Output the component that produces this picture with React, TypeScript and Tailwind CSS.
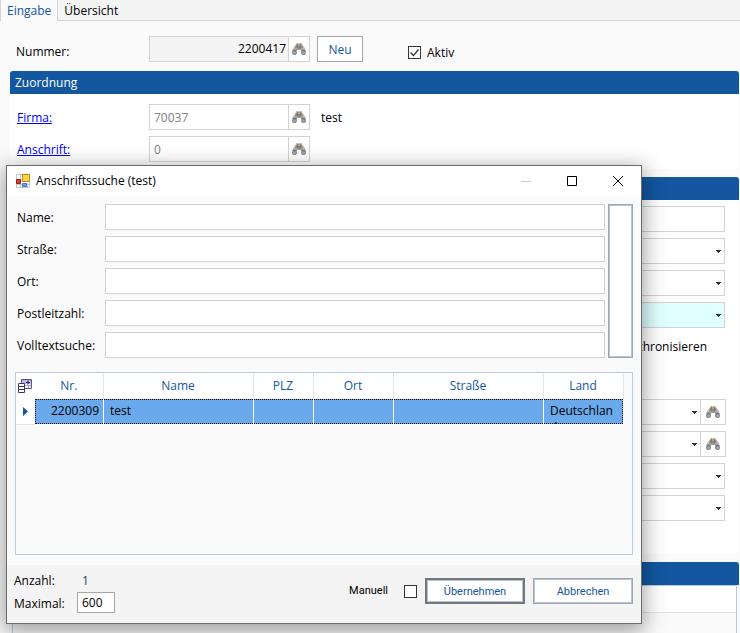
import type { ReactNode } from "react";

function Binoculars() {
  return (
    <svg width="14" height="12" viewBox="0 0 14 12" aria-hidden="true">
      <path d="M4 1l1-1h1l1 1 1-1h1l1 1 2 3 2 4v2l-1 2h-3L9 10V7H5v3l-1 2H1l-1-2V8l2-4z" fill="#aba49c" />
      <path d="M4.5 1.5L2 6M9.5 1.5L12 6" stroke="#d0cbc5" fill="none" />
      <path d="M3.5 5L5.5 1.5v4M10.5 5l-2-3.5v4" stroke="#7f7870" fill="none" />
      <path d="M6 3h2v3H6z" fill="#8f8982" />
      <path d="M1 7.5h3.5M9.5 7.5H13" stroke="#77726c" fill="none" />
      <ellipse cx="2.5" cy="9.8" rx="1.8" ry="1.6" fill="#8fb0ca" stroke="#808080" strokeWidth=".8" />
      <ellipse cx="11.5" cy="9.8" rx="1.8" ry="1.6" fill="#8fb0ca" stroke="#808080" strokeWidth=".8" />
    </svg>
  );
}

function AppIcon() {
  return (
    <svg width="14" height="14" viewBox="0 0 14 14" aria-hidden="true">
      <path d="M.5.5h13v13H.5zM.5 10.5h13M4.5 0v14M11.5 9v5" fill="#fff" stroke="#c4c4c4" />
      <path d="M.5 5.5h4v4h-4z" fill="#d8432f" stroke="#9b1a14" />
      <path d="M6.5.5h7v7h-7z" fill="#ffd34d" stroke="#b8860b" />
      <path d="M6.5 9.5h4v3h-4z" fill="#6fa3f2" stroke="#3f74d0" />
    </svg>
  );
}

function GridIcon() {
  return (
    <svg width="14" height="14" viewBox="0 0 14 14" aria-hidden="true">
      <path d="M3.5.5h10v9h-10z" fill="#f4f3f9" stroke="#5a5480" />
      <path d="M4 1h9v4H4z" fill="#bcb8d6" />
      <path d="M8 3.5h4M10 1.5v4" stroke="#2b2650" />
      <path d="M7 6.5h6M10.5 6v3" stroke="#a9a5c6" />
      <path d="M.5 4.5h6v9h-6z" fill="#fff" stroke="#3d3765" />
      <path d="M1 7.5h5M1 10.5h5" stroke="#3d3765" />
    </svg>
  );
}

function Arrow() {
  return (
    <svg width="5" height="3" viewBox="0 0 5 3" aria-hidden="true" className="shrink-0">
      <path d="M0 0h5v1H4v1H3v1H2V2H1V1H0z" fill="#333" />
    </svg>
  );
}

function SearchButton({ label }: { label: string }) {
  return (
    <button aria-label={label} className="flex w-[22px] shrink-0 items-center justify-center border border-[#d3d3d3] bg-white">
      <Binoculars />
    </button>
  );
}

function SectionTitle({ children }: { children?: ReactNode }) {
  return <h2 className="h-[23px] rounded-t-[3px] bg-[#1357a0] px-[5px] leading-[23px] text-white">{children}</h2>;
}

function Combo({ label, search, highlight }: { label: string; search?: boolean; highlight?: boolean }) {
  return (
    <div className="flex h-[26px]">
      <div className={`relative flex flex-1 items-center border border-[#d3d3d3] ${highlight ? "bg-[#e0ffff]" : "bg-white"}`}>
        <select aria-label={label} className="h-full w-full appearance-none outline-none" />
        <span className="pointer-events-none absolute right-[3px]">
          <Arrow />
        </span>
      </div>
      {search && (
        <button aria-label={`${label} suchen`} className="flex w-[25px] items-center justify-center border border-l-0 border-[#d3d3d3] bg-white">
          <Binoculars />
        </button>
      )}
    </div>
  );
}

const searchFields = ["Name:", "Straße:", "Ort:", "Postleitzahl:", "Volltextsuche:"];

const columns = [
  { title: "Nr.", width: "w-[68px]" },
  { title: "Name", width: "w-[150px]" },
  { title: "PLZ", width: "w-[60px]" },
  { title: "Ort", width: "w-[80px]" },
  { title: "Straße", width: "w-auto" },
  { title: "Land", width: "w-[80px]" },
];

function SearchDialog() {
  return (
    <div
      role="dialog"
      aria-label="Anschriftssuche (test)"
      className="absolute top-[165px] right-[98px] left-[6px] flex flex-col border border-[#6b6b6b] bg-[#fafafa] shadow-[0_5px_20px_2px_rgba(0,0,0,0.38)]"
    >
      <div className="flex h-[30px] items-center bg-white pl-[9px]">
        <AppIcon />
        <span className="ml-[6px] flex-1">Anschriftssuche (test)</span>
        <button aria-label="Minimieren" disabled className="flex w-[46px] justify-center">
          <svg width="10" height="10"><path d="M0 5.5h10" stroke="#ccc" /></svg>
        </button>
        <button aria-label="Maximieren" className="flex w-[46px] justify-center">
          <svg width="10" height="10"><path d="M.5.5h9v9h-9z" fill="none" stroke="#000" /></svg>
        </button>
        <button aria-label="Schließen" className="flex w-[46px] justify-center">
          <svg width="10" height="10"><path d="M0 0l10 10M10 0L0 10" stroke="#000" /></svg>
        </button>
      </div>

      {/* Search fields */}
      <div className="flex gap-[3px] pt-2 pr-2 pl-[10px]">
        <div className="flex flex-1 flex-col gap-[6px]">
          {searchFields.map((name) => (
            <label key={name} className="flex h-[26px] items-center">
              <span className="w-[88px] pt-0.5">{name}</span>
              <input className="h-full flex-1 border border-[#d3d3d3] bg-white px-1 outline-none" />
            </label>
          ))}
        </div>
        <button aria-label="Suchen" className="w-[25px] border border-[#a6a6a6] bg-white inset-ring inset-ring-[#b0c4de]" />
      </div>

      {/* Result list */}
      <div className="mx-2 mt-[14px] h-[183px] border border-[#b9cbdc]">
        <table className="w-full table-fixed border-collapse">
          <thead>
            <tr className="h-[26px] bg-white text-[#1357a0]">
              <th className="w-[19px] p-0 pl-[2px]">
                <GridIcon />
              </th>
              {columns.map((c) => (
                <th key={c.title} className={`border-r border-[#e3e3e3] p-0 pb-px font-normal ${c.width}`}>
                  {c.title}
                </th>
              ))}
              <th className="w-[9px] bg-[#fafafa] p-0" />
            </tr>
          </thead>
          <tbody>
            <tr className="h-[25px]">
              <td className="border-b border-[#e3e3e3] bg-white p-0 pl-[7px]">
                <svg width="5" height="9" aria-hidden="true"><path d="M0 0l5 4.5L0 9z" fill="#1357a0" /></svg>
              </td>
              <td colSpan={6} className="p-0">
                <div className="flex h-[25px] bg-[#6aa9ec] leading-[23px] outline-1 -outline-offset-1 outline-black outline-dotted">
                  <span className="w-[69px] border-r border-white pr-1 text-right">2200309</span>
                  <span className="w-[150px] border-r border-white pl-[6px]">test</span>
                  <span className="w-[60px] border-r border-white" />
                  <span className="w-[80px] border-r border-white" />
                  <span className="flex-1 border-r border-white" />
                  <span className="w-[79px] overflow-hidden pt-[3px] pr-2 pl-[6px] leading-[17px] break-all">Deutschland</span>
                </div>
              </td>
              <td className="p-0" />
            </tr>
          </tbody>
        </table>
      </div>

      {/* Footer */}
      <div className="mt-[10px] flex h-[58px] justify-between bg-[#f4f4f4] pr-2 pl-[7px]">
        <div className="pt-1">
          <div className="flex h-[23px] items-center">
            <span className="w-[68px]">Anzahl:</span>
            <span className="text-[#1c3f66]">1</span>
          </div>
          <label className="flex h-[21px] items-center">
            <span className="w-[63px] pt-0.5">Maximal:</span>
            <input defaultValue="600" className="h-[21px] w-[38px] border border-[#a6a6a6] bg-white px-1 outline-none" />
          </label>
        </div>
        <div className="mt-[13px] flex h-[26px] items-center font-[Roboto,sans-serif] text-[11px]">
          <label className="mr-2 flex items-center gap-4">
            Manuell
            <input type="checkbox" className="size-[13px] appearance-none border border-[#333] bg-white" />
          </label>
          <button className="h-[26px] w-[100px] border-2 border-[#777] bg-white pt-0.5 text-[#1357a0] inset-ring inset-ring-[#b0c4de]">
            Übernehmen
          </button>
          <button className="ml-2 h-[26px] w-[100px] border border-[#a6a6a6] bg-white pt-0.5 text-[#1357a0] inset-ring inset-ring-[#b0c4de]">
            Abbrechen
          </button>
        </div>
      </div>
    </div>
  );
}

export default function App() {
  return (
    <div className="relative min-h-[633px] overflow-hidden bg-[#fafafa] font-['Open_Sans','Noto_Sans',sans-serif] text-[12px] leading-[18px] text-black">
      <nav className="flex h-[21px]">
        <button className="border-x border-[#d3d3d3] px-[6px] text-[#1357a0]">Eingabe</button>
        <button className="flex-1 border-b border-[#d3d3d3] bg-[#f4f4f4] px-[6px] pt-0.5 text-left">Übersicht</button>
      </nav>

      <div className="flex h-[50px] items-start pt-[15px] pl-4">
        <label htmlFor="nummer" className="w-[133px] leading-[32px]">
          Nummer:
        </label>
        <div className="flex h-[26px] w-[161px]">
          <input id="nummer" readOnly value="2200417" className="min-w-0 flex-1 border border-r-0 border-[#d3d3d3] bg-[#f4f4f4] px-[2px] text-right outline-none" />
          <SearchButton label="Nummer suchen" />
        </div>
        <button className="ml-[7px] h-[26px] w-[46px] border border-[#a6a6a6] bg-white pt-0.5 text-[#1357a0]">Neu</button>
        <label className="ml-[45px] flex h-[32px] items-center gap-[6px]">
          <span className="relative flex">
            <input type="checkbox" defaultChecked className="size-[13px] appearance-none border border-[#333] bg-white" />
            <svg width="13" height="13" className="pointer-events-none absolute" aria-hidden="true">
              <path d="M2.5 6.5l3 3 5-6" fill="none" stroke="#333" strokeWidth="1.2" />
            </svg>
          </span>
          <span className="pt-0.5">Aktiv</span>
        </label>
      </div>

      <main className="flex flex-col gap-2 pr-px pl-[10px]">
        <section>
          <SectionTitle>Zuordnung</SectionTitle>
          <div className="flex h-[75px] flex-col gap-[6px] rounded-b bg-white pt-[10px] pl-[7px]">
            <div className="flex h-[26px] items-center">
              <a href="#firma" className="w-[132px] pt-0.5 text-[#0000ff] underline">Firma:</a>
              <div className="flex h-[26px] w-[161px]">
                <input aria-label="Firma" defaultValue="70037" className="min-w-0 flex-1 border border-r-0 border-[#d3d3d3] px-1 pt-0.5 text-[#808080] outline-none" />
                <SearchButton label="Firma suchen" />
              </div>
              <span className="ml-[11px] pt-0.5">test</span>
            </div>
            <div className="flex h-[26px] items-center">
              <a href="#anschrift" className="w-[132px] pt-0.5 text-[#0000ff] underline">Anschrift:</a>
              <div className="flex h-[26px] w-[161px]">
                <input aria-label="Anschrift" defaultValue="0" className="min-w-0 flex-1 border border-r-0 border-[#d3d3d3] px-1 pt-0.5 text-[#808080] outline-none" />
                <SearchButton label="Anschrift suchen" />
              </div>
            </div>
          </div>
        </section>

        <section>
          <SectionTitle />
          <div className="flex h-[354px] flex-col gap-[6px] rounded-b bg-white pt-[6px] pr-[14px] pl-[139px]">
            <input aria-label="Bezeichnung" className="h-[26px] shrink-0 border border-[#d3d3d3] outline-none" />
            <Combo label="Art" />
            <Combo label="Status" />
            <Combo label="Gruppe" highlight />
            <div className="flex h-[26px] items-center justify-end pr-[18px]">synchronisieren</div>
            <div className="-mr-px mt-[33px] flex flex-col gap-[6px]">
              <Combo label="Betreuer" search />
              <Combo label="Vertreter" search />
            </div>
            <Combo label="Sprache" />
            <Combo label="Land" />
          </div>
        </section>

        <section>
          <SectionTitle />
          <div className="mx-[2px] h-[50px] border border-b-0 border-[#b9cbdc]">
            <div className="h-[27px] border-b border-[#e3e3e3] bg-white" />
          </div>
        </section>
      </main>

      <SearchDialog />
    </div>
  );
}
